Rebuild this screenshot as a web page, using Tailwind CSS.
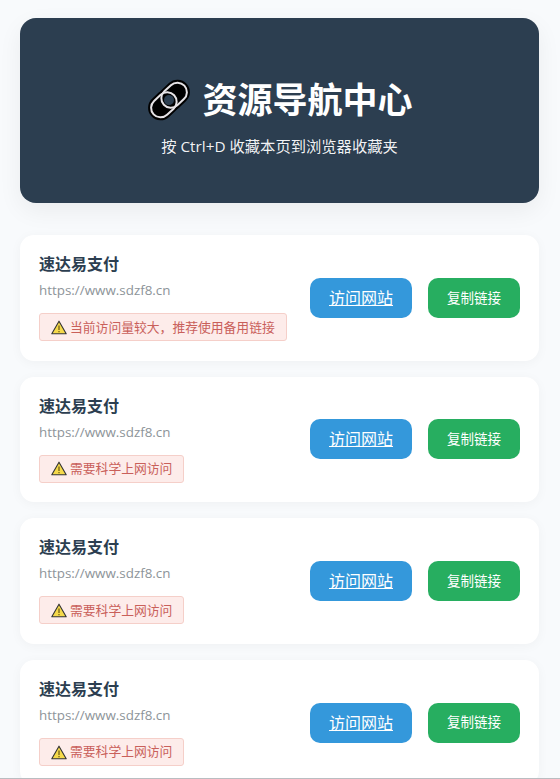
<!DOCTYPE html>
<html lang="zh-CN">
<head>
  <meta charset="UTF-8">
  <meta name="viewport" content="width=device-width, initial-scale=1.0">
  <title>资源导航中心</title>
  <script src="https://cdn.jsdelivr.net/npm/@tailwindcss/browser@4"></script>
</head>
<body class="bg-[#f8fafc] font-['Open_Sans','Noto_Sans_CJK_SC',sans-serif] h-[779px] overflow-hidden border-b border-[#b9bdc1]">
  <div class="px-5 pt-[18px]">
    <!-- 头部 -->
    <header class="w-[519px] h-[185px] bg-[#2c3e50] rounded-[16px] shadow-[0_8px_24px_rgba(0,0,0,0.06)] flex flex-col items-center text-white pt-[57px]">
      <div class="flex items-center gap-[13px] h-[50px] ml-[3px]">
        <svg width="40" height="40" viewBox="0 0 40 40" fill="none" class="overflow-visible">
          <g transform="rotate(-43 20 20)">
            <rect x="-2" y="9.5" width="30" height="21" rx="10.5" fill="#000" stroke="#000" stroke-width="4"/>
            <rect x="12" y="9.5" width="30" height="21" rx="10.5" fill="#000" stroke="#000" stroke-width="4"/>
            <rect x="-1" y="10.5" width="28" height="19" rx="9.5" stroke="#e6e3e6" stroke-width="2"/>
            <rect x="13" y="10.5" width="28" height="19" rx="9.5" stroke="#e6e3e6" stroke-width="2"/>
            <circle cx="20" cy="20" r="5" fill="#2c3e50"/>
          </g>
        </svg>
        <h1 class="text-[35px] leading-[50px] font-bold">资源导航中心</h1>
      </div>
      <p class="text-[15.3px] leading-5 mt-[11px] text-white/95">按 Ctrl+D 收藏本页到浏览器收藏夹</p>
    </header>

    <main class="mt-8 flex flex-col gap-4 w-[519px]">
      <!-- 卡片 1 -->
      <div class="bg-white rounded-[14px] h-[125.6px] px-[19px] flex items-center justify-between shadow-[0_2px_12px_rgba(0,0,0,0.04)]">
        <div class="flex flex-col items-start pb-[2px]">
          <h3 class="text-[16px] leading-6 font-semibold text-[#2c3e50]">速达易支付</h3>
          <p class="text-[13.4px] leading-5 mt-1 text-[#8d9499]">https://www.sdzf8.cn</p>
          <div class="mt-[13px] h-[28px] px-[11px] flex items-center gap-[3px] bg-[#fdecea] border border-[#f5cfc9] rounded-[3px] text-[12.8px] text-[#c9605a]">
            <svg width="16" height="15" viewBox="0 0 16 15"><path d="M8 1.2 15.2 13.8H.8Z" fill="#f5d94a" stroke="#333" stroke-width="1.1" stroke-linejoin="round"/><path d="M8 5.5V10M8 11v1.2" stroke="#5a4a10" stroke-width="1.1"/></svg>
            <span>当前访问量较大，推荐使用备用链接</span>
          </div>
        </div>
        <div class="flex items-center gap-4">
          <a href="#" class="w-[102px] h-10 flex items-center justify-center rounded-[10px] bg-[#3498db] text-white text-[16px] underline">访问网站</a>
          <button class="w-[92px] h-10 rounded-[10px] bg-[#27ae60] text-white text-[13.5px]">复制链接</button>
        </div>
      </div>

      <!-- 卡片 2 -->
      <div class="bg-white rounded-[14px] h-[125.6px] px-[19px] flex items-center justify-between shadow-[0_2px_12px_rgba(0,0,0,0.04)]">
        <div class="flex flex-col items-start pb-[2px]">
          <h3 class="text-[16px] leading-6 font-semibold text-[#2c3e50]">速达易支付</h3>
          <p class="text-[13.4px] leading-5 mt-1 text-[#8d9499]">https://www.sdzf8.cn</p>
          <div class="mt-[13px] h-[28px] px-[11px] flex items-center gap-[3px] bg-[#fdecea] border border-[#f5cfc9] rounded-[3px] text-[12.8px] text-[#c9605a]">
            <svg width="16" height="15" viewBox="0 0 16 15"><path d="M8 1.2 15.2 13.8H.8Z" fill="#f5d94a" stroke="#333" stroke-width="1.1" stroke-linejoin="round"/><path d="M8 5.5V10M8 11v1.2" stroke="#5a4a10" stroke-width="1.1"/></svg>
            <span>需要科学上网访问</span>
          </div>
        </div>
        <div class="flex items-center gap-4">
          <a href="#" class="w-[102px] h-10 flex items-center justify-center rounded-[10px] bg-[#3498db] text-white text-[16px] underline">访问网站</a>
          <button class="w-[92px] h-10 rounded-[10px] bg-[#27ae60] text-white text-[13.5px]">复制链接</button>
        </div>
      </div>

      <!-- 卡片 3 -->
      <div class="bg-white rounded-[14px] h-[125.6px] px-[19px] flex items-center justify-between shadow-[0_2px_12px_rgba(0,0,0,0.04)]">
        <div class="flex flex-col items-start pb-[2px]">
          <h3 class="text-[16px] leading-6 font-semibold text-[#2c3e50]">速达易支付</h3>
          <p class="text-[13.4px] leading-5 mt-1 text-[#8d9499]">https://www.sdzf8.cn</p>
          <div class="mt-[13px] h-[28px] px-[11px] flex items-center gap-[3px] bg-[#fdecea] border border-[#f5cfc9] rounded-[3px] text-[12.8px] text-[#c9605a]">
            <svg width="16" height="15" viewBox="0 0 16 15"><path d="M8 1.2 15.2 13.8H.8Z" fill="#f5d94a" stroke="#333" stroke-width="1.1" stroke-linejoin="round"/><path d="M8 5.5V10M8 11v1.2" stroke="#5a4a10" stroke-width="1.1"/></svg>
            <span>需要科学上网访问</span>
          </div>
        </div>
        <div class="flex items-center gap-4">
          <a href="#" class="w-[102px] h-10 flex items-center justify-center rounded-[10px] bg-[#3498db] text-white text-[16px] underline">访问网站</a>
          <button class="w-[92px] h-10 rounded-[10px] bg-[#27ae60] text-white text-[13.5px]">复制链接</button>
        </div>
      </div>

      <!-- 卡片 4 -->
      <div class="bg-white rounded-[14px] h-[125.6px] px-[19px] flex items-center justify-between shadow-[0_2px_12px_rgba(0,0,0,0.04)]">
        <div class="flex flex-col items-start pb-[2px]">
          <h3 class="text-[16px] leading-6 font-semibold text-[#2c3e50]">速达易支付</h3>
          <p class="text-[13.4px] leading-5 mt-1 text-[#8d9499]">https://www.sdzf8.cn</p>
          <div class="mt-[13px] h-[28px] px-[11px] flex items-center gap-[3px] bg-[#fdecea] border border-[#f5cfc9] rounded-[3px] text-[12.8px] text-[#c9605a]">
            <svg width="16" height="15" viewBox="0 0 16 15"><path d="M8 1.2 15.2 13.8H.8Z" fill="#f5d94a" stroke="#333" stroke-width="1.1" stroke-linejoin="round"/><path d="M8 5.5V10M8 11v1.2" stroke="#5a4a10" stroke-width="1.1"/></svg>
            <span>需要科学上网访问</span>
          </div>
        </div>
        <div class="flex items-center gap-4">
          <a href="#" class="w-[102px] h-10 flex items-center justify-center rounded-[10px] bg-[#3498db] text-white text-[16px] underline">访问网站</a>
          <button class="w-[92px] h-10 rounded-[10px] bg-[#27ae60] text-white text-[13.5px]">复制链接</button>
        </div>
      </div>
    </main>
  </div>
</body>
</html>
